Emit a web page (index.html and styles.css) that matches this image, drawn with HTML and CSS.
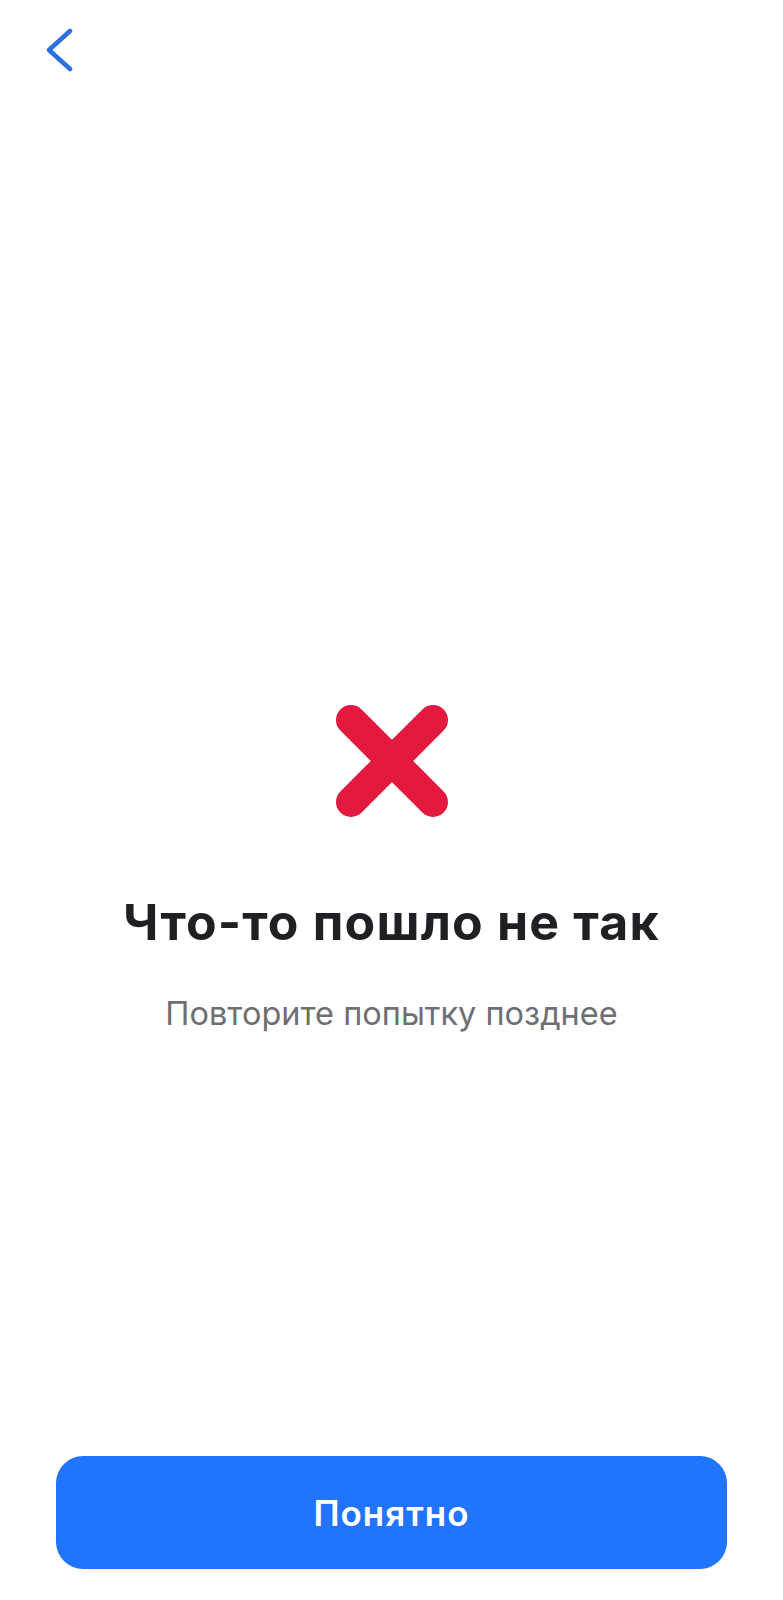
FILE: index.html
```html
<!DOCTYPE html>
<html lang="ru">
<head>
<meta charset="utf-8">
<meta name="viewport" content="width=device-width, initial-scale=1">
<title>Ошибка</title>
<link rel="stylesheet" href="styles.css">
</head>
<body>
<div class="screen">
  <header class="topbar">
    <button class="back" type="button" aria-label="Назад">
      <svg width="28" height="44" viewBox="0 0 28 44" aria-hidden="true">
        <path d="M24 3 L3 22 L24 41" fill="none" stroke="currentColor" stroke-width="4.5" stroke-linecap="round" stroke-linejoin="round"/>
      </svg>
    </button>
  </header>

  <main class="content">
    <svg class="status-icon" width="112" height="112" viewBox="0 0 112 112" aria-hidden="true">
      <path d="M15 15 L97 97 M97 15 L15 97" fill="none" stroke="currentColor" stroke-width="30" stroke-linecap="round"/>
    </svg>
    <h1 class="title">Что-то пошло не так</h1>
    <p class="subtitle">Повторите попытку позднее</p>
  </main>

  <footer class="actions">
    <button class="primary" type="button">Понятно</button>
  </footer>
</div>
</body>
</html>
```

FILE: styles.css
```css
* {
  box-sizing: border-box;
}

html,
body {
  margin: 0;
  padding: 0;
  background: #ffffff;
}

body {
  font-family: Inter, "Noto Sans", "Liberation Sans", sans-serif;
  color: #1f2024;
}

.screen {
  height: 1600px;
  display: flex;
  flex-direction: column;
}

.topbar {
  height: 100px;
  padding: 28px 0 0 46px;
}

.back {
  display: block;
  padding: 0;
  margin: 0;
  border: 0;
  background: none;
  color: #2b6fe0;
  line-height: 0;
  cursor: pointer;
}

.content {
  display: flex;
  flex-direction: column;
  align-items: center;
  padding-top: 605px;
}

.status-icon {
  display: block;
  color: #e3193f;
}

.title {
  margin: 75px 0 0;
  font-size: 50px;
  line-height: 60px;
  font-weight: 700;
  letter-spacing: 1.2px;
  color: #1f2024;
  text-align: center;
}

.subtitle {
  margin: 42px 0 0;
  font-size: 32.5px;
  line-height: 40px;
  font-weight: 400;
  color: #6e6e73;
  text-align: center;
}

.actions {
  margin-top: auto;
  padding: 0 56px 31px;
}

.primary {
  display: block;
  width: 100%;
  height: 113px;
  border: 0;
  border-radius: 27px;
  background: #2174fd;
  color: #ffffff;
  font-family: inherit;
  font-size: 35px;
  font-weight: 600;
  letter-spacing: 1px;
  cursor: pointer;
}
```
